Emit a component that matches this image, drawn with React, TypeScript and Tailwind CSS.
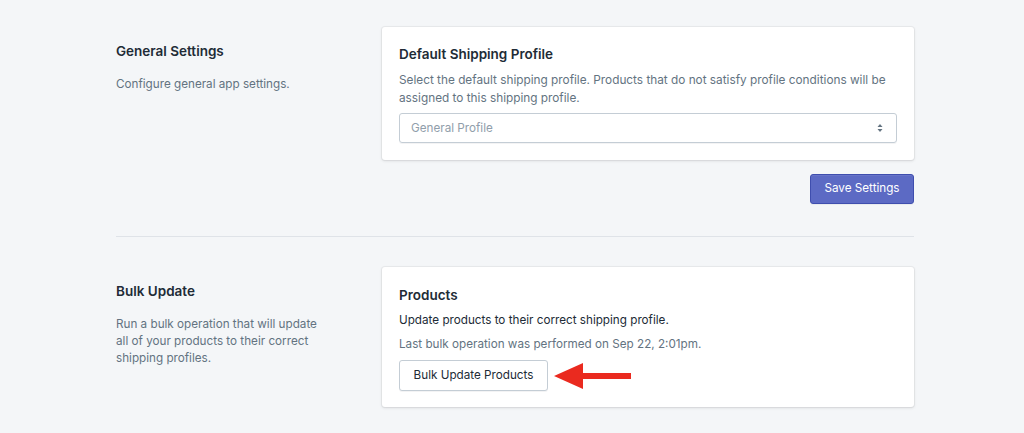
const SelectArrows = () => (
  <svg width="8" height="10" viewBox="0 0 8 10" className="text-[#637381]">
    <path d="M4 1 L6.5 4 H1.5 Z" fill="currentColor" />
    <path d="M4 9 L6.5 6 H1.5 Z" fill="currentColor" />
  </svg>
);

const RedArrow = () => (
  <svg width="78" height="28" viewBox="0 0 78 28" className="ml-[6px]">
    <path d="M0 14 L29 1 L29 11 L77 11 L77 17 L29 17 L29 27 Z" fill="#ea2a1f" />
  </svg>
);

const Card = ({ children }: { children: React.ReactNode }) => (
  <div className="bg-white rounded-[3px] shadow-[0_0_0_1px_rgba(63,63,68,0.05),0_1px_3px_0_rgba(63,63,68,0.15)] px-[17px]">
    {children}
  </div>
);

const SectionInfo = ({ title, text }: { title: string; text: string }) => (
  <div className="pt-[14px]">
    <h2 className="text-[13.5px] leading-[20px] font-semibold text-[#212b36]">{title}</h2>
    <p className="mt-[15px] text-[11.7px] leading-[17px] text-[#637381] w-[212px]">{text}</p>
  </div>
);

export default function App() {
  return (
    <div
      className="min-h-[433px] bg-[#f4f6f8] pt-[27px]"
      style={{ fontFamily: "Inter, 'Noto Sans', sans-serif" }}
    >
      <div className="w-[798px] ml-[116px]">
        <div className="grid grid-cols-[266px_1fr]">
          <SectionInfo title="General Settings" text="Configure general app settings." />
          <div>
            <Card>
              <div className="pt-[17px] pb-[17px]">
                <h3 className="text-[13.5px] leading-[20px] font-semibold text-[#212b36]">
                  Default Shipping Profile
                </h3>
                <p className="mt-[7px] text-[11.8px] leading-[18px] text-[#637381] pr-[10px]">
                  Select the default shipping profile. Products that do not satisfy profile conditions will be assigned to this shipping profile.
                </p>
                <div className="mt-[6px] h-[30px] border border-[#c4cdd5] rounded-[3px] shadow-[0_1px_0_0_rgba(22,29,37,0.05)] flex items-center justify-between pl-[11px] pr-[12px]">
                  <span className="text-[11.7px] text-[#919eab] translate-y-[1px]">General Profile</span>
                  <SelectArrows />
                </div>
              </div>
            </Card>
            <div className="flex justify-end mt-[14px]">
              <button className="h-[30px] w-[104px] rounded-[3px] bg-[#5c6ac4] border border-[#3f4eae] text-white text-[11.7px] shadow-[inset_0_1px_0_0_#6774c8,0_1px_0_0_rgba(22,29,37,0.05)]">
                Save Settings
              </button>
            </div>
          </div>
        </div>

        <div className="mt-[32px] border-t border-[#dfe3e8]" />

        <div className="grid grid-cols-[266px_1fr] mt-[30px]">
          <SectionInfo
            title="Bulk Update"
            text="Run a bulk operation that will update all of your products to their correct shipping profiles."
          />
          <Card>
            <div className="pt-[18px] pb-[16px]">
              <h3 className="text-[13.5px] leading-[20px] font-semibold text-[#212b36]">Products</h3>
              <p className="mt-[6px] text-[11.7px] leading-[18px] text-[#212b36]">
                Update products to their correct shipping profile.
              </p>
              <p className="mt-[6px] text-[11.7px] leading-[18px] text-[#637381]">
                Last bulk operation was performed on Sep 22, 2:01pm.
              </p>
              <div className="mt-[7px] flex items-center">
                <button className="h-[31px] w-[149px] rounded-[3px] bg-white border border-[#c4cdd5] text-[#212b36] text-[11.7px] shadow-[0_1px_0_0_rgba(22,29,37,0.05)]">
                  Bulk Update Products
                </button>
                <RedArrow />
              </div>
            </div>
          </Card>
        </div>
      </div>
    </div>
  );
}
